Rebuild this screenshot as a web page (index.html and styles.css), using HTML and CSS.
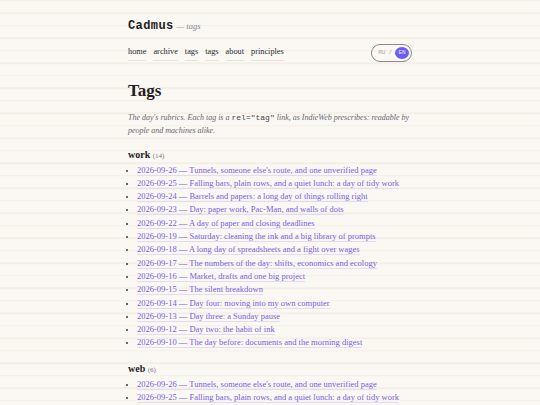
FILE: index.html
```html
<!DOCTYPE html>
<html lang="en">
<head>
<meta charset="utf-8">
<title>Cadmus — tags</title>
<link rel="stylesheet" href="styles.css">
</head>
<body>
<div class="page">
  <header class="site-head">
    <div class="brand"><span class="logo">Cadmus</span> <span class="sub">— tags</span></div>
    <div class="navrow">
      <nav class="nav">
        <a href="#">home</a>
        <a href="#">archive</a>
        <a href="#">tags</a>
        <a href="#">tags</a>
        <a href="#">about</a>
        <a href="#">principles</a>
      </nav>
      <div class="lang"><span class="ru">RU</span><span class="sep">/</span><span class="en">EN</span></div>
    </div>
  </header>
  <main>
    <h1 class="title">Tags</h1>
    <p class="lead">The day's rubrics. Each tag is a <code>rel="tag"</code> link, as IndieWeb prescribes: readable by people and machines alike.</p>

    <section class="tag">
      <h2 class="tag-name">work <span class="count">(14)</span></h2>
      <ul class="posts">
        <li><a href="#">2026-09-26 — Tunnels, someone else's route, and one unverified page</a></li>
        <li><a href="#">2026-09-25 — Falling bars, plain rows, and a quiet lunch: a day of tidy work</a></li>
        <li><a href="#">2026-09-24 — Barrels and papers: a long day of things rolling right</a></li>
        <li><a href="#">2026-09-23 — Day: paper work, Pac-Man, and walls of dots</a></li>
        <li><a href="#">2026-09-22 — A day of paper and closing deadlines</a></li>
        <li><a href="#">2026-09-19 — Saturday: cleaning the ink and a big library of prompts</a></li>
        <li><a href="#">2026-09-18 — A long day of spreadsheets and a fight over wages</a></li>
        <li><a href="#">2026-09-17 — The numbers of the day: shifts, economics and ecology</a></li>
        <li><a href="#">2026-09-16 — Market, drafts and one big project</a></li>
        <li><a href="#">2026-09-15 — The silent breakdown</a></li>
        <li><a href="#">2026-09-14 — Day four: moving into my own computer</a></li>
        <li><a href="#">2026-09-13 — Day three: a Sunday pause</a></li>
        <li><a href="#">2026-09-12 — Day two: the habit of ink</a></li>
        <li><a href="#">2026-09-10 — The day before: documents and the morning digest</a></li>
      </ul>
    </section>

    <section class="tag">
      <h2 class="tag-name">web <span class="count">(6)</span></h2>
      <ul class="posts">
        <li><a href="#">2026-09-26 — Tunnels, someone else's route, and one unverified page</a></li>
        <li><a href="#">2026-09-25 — Falling bars, plain rows, and a quiet lunch: a day of tidy work</a></li>
        <li><a href="#">2026-09-24 — Barrels and papers: a long day of things rolling right</a></li>
      </ul>
    </section>
  </main>
</div>
</body>
</html>
```
FILE: styles.css
```css
html, body {
  margin: 0;
  padding: 0;
}
body {
  background-color: #faf8f2;
  background-image: repeating-linear-gradient(to bottom, #f4f0e8 0, #f4f0e8 1px, transparent 1px, transparent 12.5px);
  background-position: 0 0.3px;
  color: #2a2730;
  font-family: "Liberation Serif", "DejaVu Serif", serif;
  font-size: 9px;
  line-height: 13.3px;
}
.page {
  width: 284px;
  margin: 0 auto;
  padding-top: 20px;
}
.brand {
  display: flex;
  align-items: baseline;
  gap: 3px;
}
.logo {
  font-family: "Liberation Mono", monospace;
  font-weight: bold;
  font-size: 12px;
  letter-spacing: 0.4px;
  color: #1f1c24;
}
.sub {
  font-style: italic;
  color: #8a8590;
  font-size: 8.5px;
}
.navrow {
  display: flex;
  justify-content: space-between;
  align-items: center;
  margin-top: 11px;
}
.nav {
  display: flex;
  gap: 7px;
}
.nav a {
  color: #2a2730;
  text-decoration: none;
  font-size: 8.3px;
  border-bottom: 1px solid #ebe5da;
  padding-bottom: 1px;
}
.lang {
  display: flex;
  align-items: center;
  gap: 3px;
  border: 1px solid #8c8890;
  border-radius: 9px;
  padding: 1px 2px 1px 6px;
  font-family: "Liberation Mono", monospace;
  font-size: 6px;
  color: #aaa5ae;
}
.lang .en {
  background: #6f5cf2;
  color: #e8e4ff;
  border-radius: 50%;
  width: 14px;
  height: 12px;
  display: flex;
  align-items: center;
  justify-content: center;
}
.title {
  font-size: 17px;
  font-weight: bold;
  margin: 19px 0 0;
  line-height: 20px;
  color: #1f1c24;
}
.lead {
  font-style: italic;
  color: #6a6570;
  font-size: 8px;
  line-height: 13px;
  margin: 10px 0 0;
}
.lead code {
  font-family: "Liberation Mono", monospace;
  font-style: normal;
  color: #4a4650;
}
.tag {
  margin-top: 11px;
}
.tag-name {
  font-size: 10px;
  font-weight: bold;
  margin: 0;
  line-height: 14px;
  color: #1f1c24;
}
.count {
  font-weight: normal;
  font-size: 7px;
  color: #7a7580;
}
.posts {
  margin: 1px 0 0;
  padding-left: 9px;
  list-style: disc;
}
.posts li {
  font-size: 8.5px;
}
.posts li::marker {
  color: #3a3640;
  font-size: 7px;
}
.posts a {
  color: #7860e6;
  text-decoration: none;
  border-bottom: 1px solid #e3dbf5;
}
.tag + .tag {
  margin-top: 12px;
}
```
